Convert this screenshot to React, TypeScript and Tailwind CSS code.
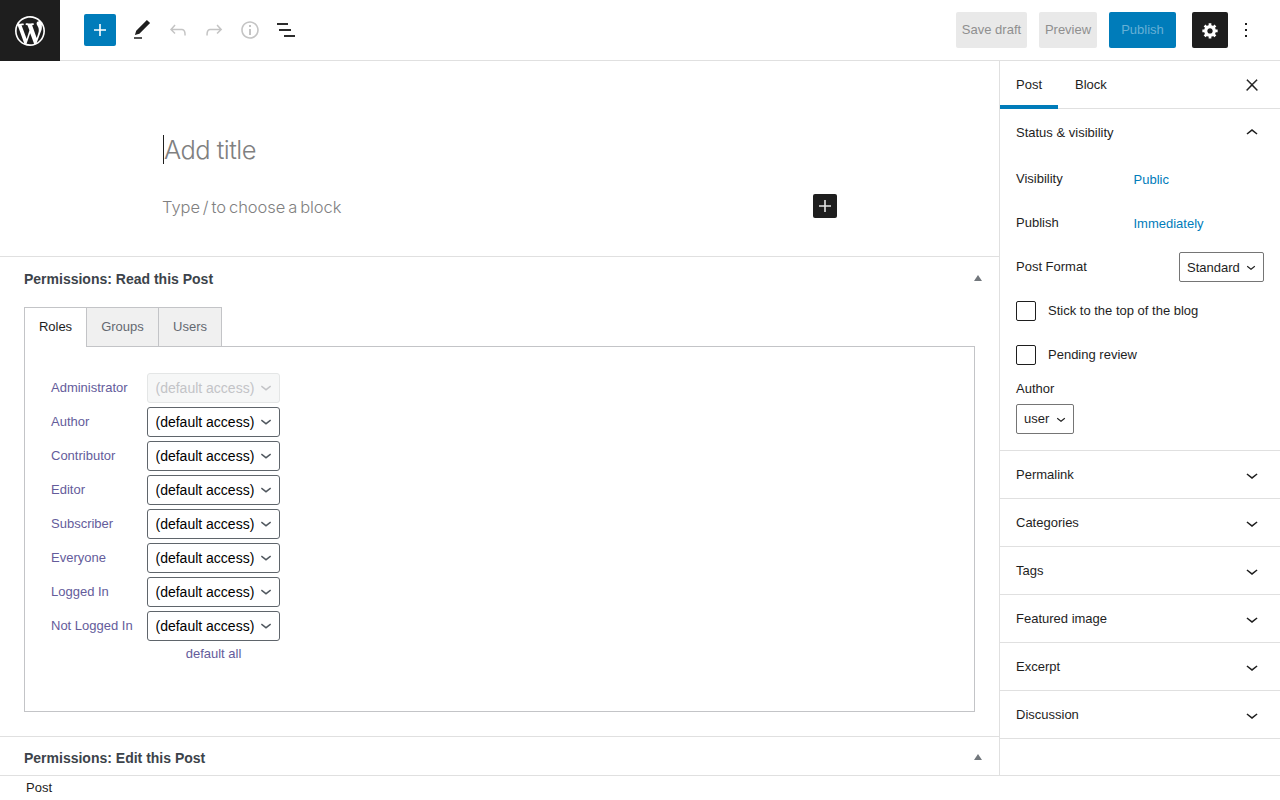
const roles = ["Author", "Contributor", "Editor", "Subscriber", "Everyone", "Logged In", "Not Logged In"];
const panels = ["Permalink", "Categories", "Tags", "Featured image", "Excerpt", "Discussion"];

const Icon = ({ d, className, box = "0 0 24 24" }: { d: string; className?: string; box?: string }) => (
  <svg viewBox={box} width="24" height="24" fill="currentColor" className={className}>
    <path d={d} />
  </svg>
);

const plus = "M18 11.2h-5.2V6h-1.6v5.2H6v1.6h5.2V18h1.6v-5.2H18z";
const chevronDown = "M17.5 11.6L12 16l-5.5-4.4.9-1.2L12 14l4.6-3.6 1 1.2z";
const chevronUp = "M6.5 12.4L12 8l5.5 4.4-.9 1.2L12 10l-4.5 3.6-1-1.2z";

const SelectChevron = ({ className }: { className: string }) => (
  <svg viewBox="0 0 24 24" fill="currentColor" className={`absolute pointer-events-none ${className}`}>
    <path d={chevronDown} />
  </svg>
);

// the select in the roles table
const RoleSelect = ({ disabled }: { disabled?: boolean }) => (
  <div className="relative w-[133px] h-[30px]">
    <select
      disabled={disabled}
      className={`appearance-none w-full h-full rounded-[3px] border pl-[7.5px] text-[14px] ${
        disabled
          ? "border-[#e4e6e6] bg-[#f6f7f7] text-[#c3c4c7] opacity-100"
          : "border-[#5f656b] bg-white text-black"
      }`}
    >
      <option>(default access)</option>
    </select>
    <SelectChevron className={`right-[3px] top-[2.5px] w-[22px] h-[22px] ${disabled ? "text-[#c3c4c7]" : "text-[#50575e]"}`} />
  </div>
);

const Header = () => (
  <header className="h-[61px] shrink-0 flex items-center border-b border-[#e0e0e0] bg-white">
    <div className="w-[60px] h-[61px] self-start bg-[#1e1e1e] flex items-center justify-center text-white">
      <svg viewBox="-2 -2 24 24" width="36" height="36" fill="currentColor">
        <path d="M20 10c0-5.51-4.49-10-10-10C4.48 0 0 4.49 0 10c0 5.52 4.48 10 10 10 5.51 0 10-4.48 10-10zM7.78 15.37L4.37 6.22c.55-.02 1.17-.08 1.17-.08.5-.06.44-1.13-.06-1.11 0 0-1.45.11-2.37.11-.18 0-.37 0-.58-.01C4.12 2.69 6.87 1.11 10 1.11c2.33 0 4.45.87 6.05 2.34-.68-.11-1.65.39-1.65 1.58 0 .74.45 1.36.9 2.1.35.61.55 1.36.55 2.46 0 1.49-1.4 5-1.4 5l-3.03-8.37c.54-.02.82-.17.82-.17.5-.05.44-1.25-.06-1.22 0 0-1.44.12-2.38.12-.87 0-2.33-.12-2.33-.12-.5-.03-.56 1.2-.06 1.22l.92.08 1.26 3.41zM17.41 10c.24-.64.74-1.87.43-4.25.7 1.29 1.05 2.71 1.05 4.25 0 3.29-1.73 6.24-4.4 7.78.97-2.59 1.94-5.2 2.92-7.78zM6.1 18.09C3.12 16.65 1.11 13.53 1.11 10c0-1.3.23-2.48.72-3.59C3.25 10.3 4.67 14.2 6.1 18.09zm4.03-6.63l2.58 6.98c-.86.29-1.76.45-2.71.45-.79 0-1.57-.11-2.29-.33.81-2.38 1.62-4.74 2.42-7.1z" />
      </svg>
    </div>
    <button className="ml-6 w-8 h-8 rounded-[2px] bg-[#007cba] text-white flex items-center justify-center">
      <Icon d={plus} />
    </button>
    <div className="ml-[14px] flex items-center gap-3">
      <Icon className="text-[#1e1e1e]" d="M20.1 5.1L16.9 2 6.2 12.7l-1.3 4.4 4.5-1.3L20.1 5.1zM4 20.8h8v-1.5H4v1.5z" />
      <Icon
        className="text-[#c4c4c4]"
        d="M18.3 11.7c-.6-.6-1.4-.9-2.3-.9H6.7l2.9-3.3-1.1-1-4.5 5L8.5 16l1-1-2.7-2.7H16c.5 0 .9.2 1.3.5 1 1 1 3.4 1 4.5v.3h1.5v-.2c0-1.5 0-4.3-1.5-5.7z"
      />
      <Icon
        className="text-[#c4c4c4]"
        d="M15.6 6.5l-1.1 1 2.9 3.3H8c-.9 0-1.7.3-2.3.9-1.4 1.5-1.4 4.2-1.4 5.6v.2h1.5v-.3c0-1.1 0-3.5 1-4.5.3-.3.7-.5 1.3-.5h9.2L14.5 15l1.1 1.1 4.6-4.6-4.6-5z"
      />
      <Icon
        className="text-[#c4c4c4]"
        d="M12 3.2c-4.8 0-8.8 3.9-8.8 8.8 0 4.8 3.9 8.8 8.8 8.8 4.8 0 8.8-3.9 8.8-8.8 0-4.8-4-8.8-8.8-8.8zm0 16c-4 0-7.2-3.3-7.2-7.2C4.8 8 8 4.8 12 4.8s7.2 3.3 7.2 7.2c0 4-3.2 7.2-7.2 7.2zM11 17h2v-6h-2v6zm0-8h2V7h-2v2z"
      />
      <svg width="24" height="24" viewBox="0 0 24 24" fill="#2c2c2c">
        <rect x="3" y="5" width="11" height="2" />
        <rect x="5" y="11" width="12" height="2" />
        <rect x="10" y="17" width="11" height="2" />
      </svg>
    </div>
    <div className="ml-auto flex items-center text-[13px]">
      <button className="h-9 w-[71px] rounded-[2px] bg-[#e9e9e9] text-[#8f8f8f]">Save draft</button>
      <button className="ml-[12px] h-9 w-[58px] rounded-[2px] bg-[#e9e9e9] text-[#8f8f8f]">Preview</button>
      <button className="ml-[12px] h-9 w-[67px] rounded-[2px] bg-[#007cba] text-[#66b0d6]">Publish</button>
      <button className="ml-4 w-9 h-9 rounded-[2px] bg-[#1e1e1e] text-white flex items-center justify-center">
        <svg viewBox="-0.5 -0.5 20 20" width="18" height="18" fill="currentColor">
          <path d="M18 12h-2.18c-.17.7-.44 1.35-.81 1.93l1.54 1.54-2.1 2.1-1.54-1.54c-.58.36-1.23.63-1.91.79V19H8v-2.18c-.68-.16-1.33-.43-1.91-.79l-1.54 1.54-2.12-2.12 1.54-1.54c-.36-.58-.63-1.23-.79-1.91H1V9.03h2.17c.16-.7.44-1.35.8-1.94L2.43 5.55l2.1-2.1 1.54 1.54c.58-.37 1.24-.64 1.93-.81V2h3v2.18c.68.16 1.33.43 1.91.79l1.54-1.54 2.12 2.12-1.54 1.54c.36.59.64 1.24.8 1.94H18V12zm-8.5 1.5c1.66 0 3-1.34 3-3s-1.34-3-3-3-3 1.34-3 3 1.34 3 3 3z" />
        </svg>
      </button>
      <Icon className="ml-[6px] mr-[22px] text-[#1e1e1e]" d="M13 19h-2v-2h2v2zm0-6h-2v-2h2v2zm0-6h-2V5h2v2z" />
    </div>
  </header>
);

const MetaHeading = ({ title, className }: { title: string; className: string }) => (
  <div className={`flex items-center justify-between pl-6 pr-[17px] ${className}`}>
    <h2 className="font-bold text-[14px] text-[#3c434a]">{title}</h2>
    <span className="-mt-[3px] w-0 h-0 border-x-[4px] border-x-transparent border-b-[6px] border-b-[#72777c]" />
  </div>
);

const Editor = () => (
  <main className="flex-1 min-w-0 overflow-hidden">
    <div className="h-[196px] border-b border-[#e0e0e0] pl-[163px] relative">
      <div
        className="pt-[71px] h-[128px] text-[25.5px] tracking-[-0.55px] font-light text-[#808080] leading-[36px]"
        style={{ fontFamily: "Inter, sans-serif" }}
      >
        <span className="border-l border-[#1e1e1e] inline-block h-[29px] leading-[29px]">Add title</span>
      </div>
      <p
        className="pt-[6px] -ml-px text-[16.5px] tracking-[-0.06px] [word-spacing:-1.6px] font-light text-[#808080] leading-6"
        style={{ fontFamily: "Inter, sans-serif" }}
      >
        Type / to choose a block
      </p>
      <button className="absolute left-[813px] top-[133px] w-6 h-6 rounded-[2px] bg-[#1e1e1e] text-[#e5e5e5] flex items-center justify-center">
        <Icon d={plus} />
      </button>
    </div>

    <section className="h-[480px] border-b border-[#e0e0e0]">
      <MetaHeading title="Permissions: Read this Post" className="h-[45px]" />
      <div className="mx-6 mt-[5px]">
        <div className="flex text-[13px] h-10 relative z-10">
          <div className="w-[62px] pb-px border border-r-0 border-b-0 border-[#c3c4c7] bg-white text-[#1e1e1e] flex items-center justify-center">
            Roles
          </div>
          <div className="w-[73px] border border-[#c3c4c7] bg-[#f0f0f0] text-[#646970] flex items-center justify-center">
            Groups
          </div>
          <div className="w-[63px] border border-l-0 border-[#c3c4c7] bg-[#f0f0f0] text-[#646970] flex items-center justify-center">
            Users
          </div>
        </div>
        <div className="h-[366px] -mt-px border border-[#c3c4c7] pt-[26px] pl-[26px]">
          <div className="grid grid-cols-[96px_133px] gap-y-1 items-center text-[13px] text-[#645c9b]">
            <span>Administrator</span>
            <RoleSelect disabled />
            {roles.map((role) => (
              <div key={role} className="contents">
                <span>{role}</span>
                <RoleSelect />
              </div>
            ))}
            <span className="col-start-2 -mt-px text-center">default all</span>
          </div>
        </div>
      </div>
    </section>

    <MetaHeading title="Permissions: Edit this Post" className="h-[43px]" />
  </main>
);

const Row = ({ label, value }: { label: string; value: string }) => (
  <div className="flex h-11">
    <span className="w-[117.5px] pt-[12px] text-[13px] text-[#1e1e1e]">{label}</span>
    <a className="pt-[13px] text-[13px] text-[#007cba]">{value}</a>
  </div>
);

const Check = ({ label }: { label: string }) => (
  <label className="flex items-center h-11 text-[13px] text-[#1e1e1e]">
    <span className="w-5 h-5 rounded-[2px] border border-[#1e1e1e] bg-white mr-3" />
    {label}
  </label>
);

const Sidebar = () => (
  <aside className="w-[281px] shrink-0 border-l border-[#e0e0e0] text-[13px] text-[#1e1e1e]">
    <div className="h-12 flex items-stretch border-b border-[#e0e0e0] relative">
      <div className="w-[58px] -mb-px pl-4 pt-1 flex items-center border-b-[4px] border-[#007cba]">Post</div>
      <div className="pl-[17px] flex items-center">Block</div>
      <svg viewBox="0 0 24 24" width="18" height="18" fill="currentColor" stroke="currentColor" strokeWidth="0.6" className="absolute right-[19px] top-[15px]">
        <path d="M13 11.8l6.1-6.3-1-1-6.1 6.2-6.1-6.2-1 1 6.1 6.3-6.5 6.7 1 1 6.5-6.6 6.5 6.6 1-1z" />
      </svg>
    </div>
    <div className="h-[342px] border-b border-[#e0e0e0] px-4">
      <div className="h-12 flex items-center justify-between">
        <span>Status &amp; visibility</span>
        <Icon d={chevronUp} />
      </div>
      <Row label="Visibility" value="Public" />
      <Row label="Publish" value="Immediately" />
      <div className="flex justify-between h-11 pt-[7px]">
        <span className="pt-[5px]">Post Format</span>
        <div className="relative w-[85px] h-[30px]">
          <select className="appearance-none w-full h-full border border-[#757575] rounded-[2px] pl-[7px] pt-px bg-white text-[13px] text-[#1e1e1e]">
            <option>Standard</option>
          </select>
          <SelectChevron className="right-[4px] top-[6px] w-[18px] h-[18px]" />
        </div>
      </div>
      <Check label="Stick to the top of the blog" />
      <Check label="Pending review" />
      <div className="pt-[2px]">Author</div>
      <div className="relative w-[58px] h-[30px] mt-[5px]">
        <select className="appearance-none w-full h-full border border-[#757575] rounded-[2px] pl-[7px] pt-px bg-white text-[13px] text-[#1e1e1e]">
          <option>user</option>
        </select>
        <SelectChevron className="right-[4px] top-[6px] w-[18px] h-[18px]" />
      </div>
    </div>
    {panels.map((panel) => (
      <div key={panel} className="h-12 flex items-center justify-between border-b border-[#e0e0e0] px-4">
        <span>{panel}</span>
        <Icon d={chevronDown} />
      </div>
    ))}
  </aside>
);

export default function App() {
  return (
    <div className="w-[1280px] h-[800px] flex flex-col overflow-hidden bg-white" style={{ fontFamily: "'Liberation Sans', Arial, sans-serif" }}>
      <Header />
      <div className="flex flex-1 min-h-0">
        <Editor />
        <Sidebar />
      </div>
      <footer className="h-[25px] shrink-0 border-t border-[#e0e0e0] pl-[26px] text-[13px] leading-[23px] text-[#1e1e1e]">Post</footer>
    </div>
  );
}
